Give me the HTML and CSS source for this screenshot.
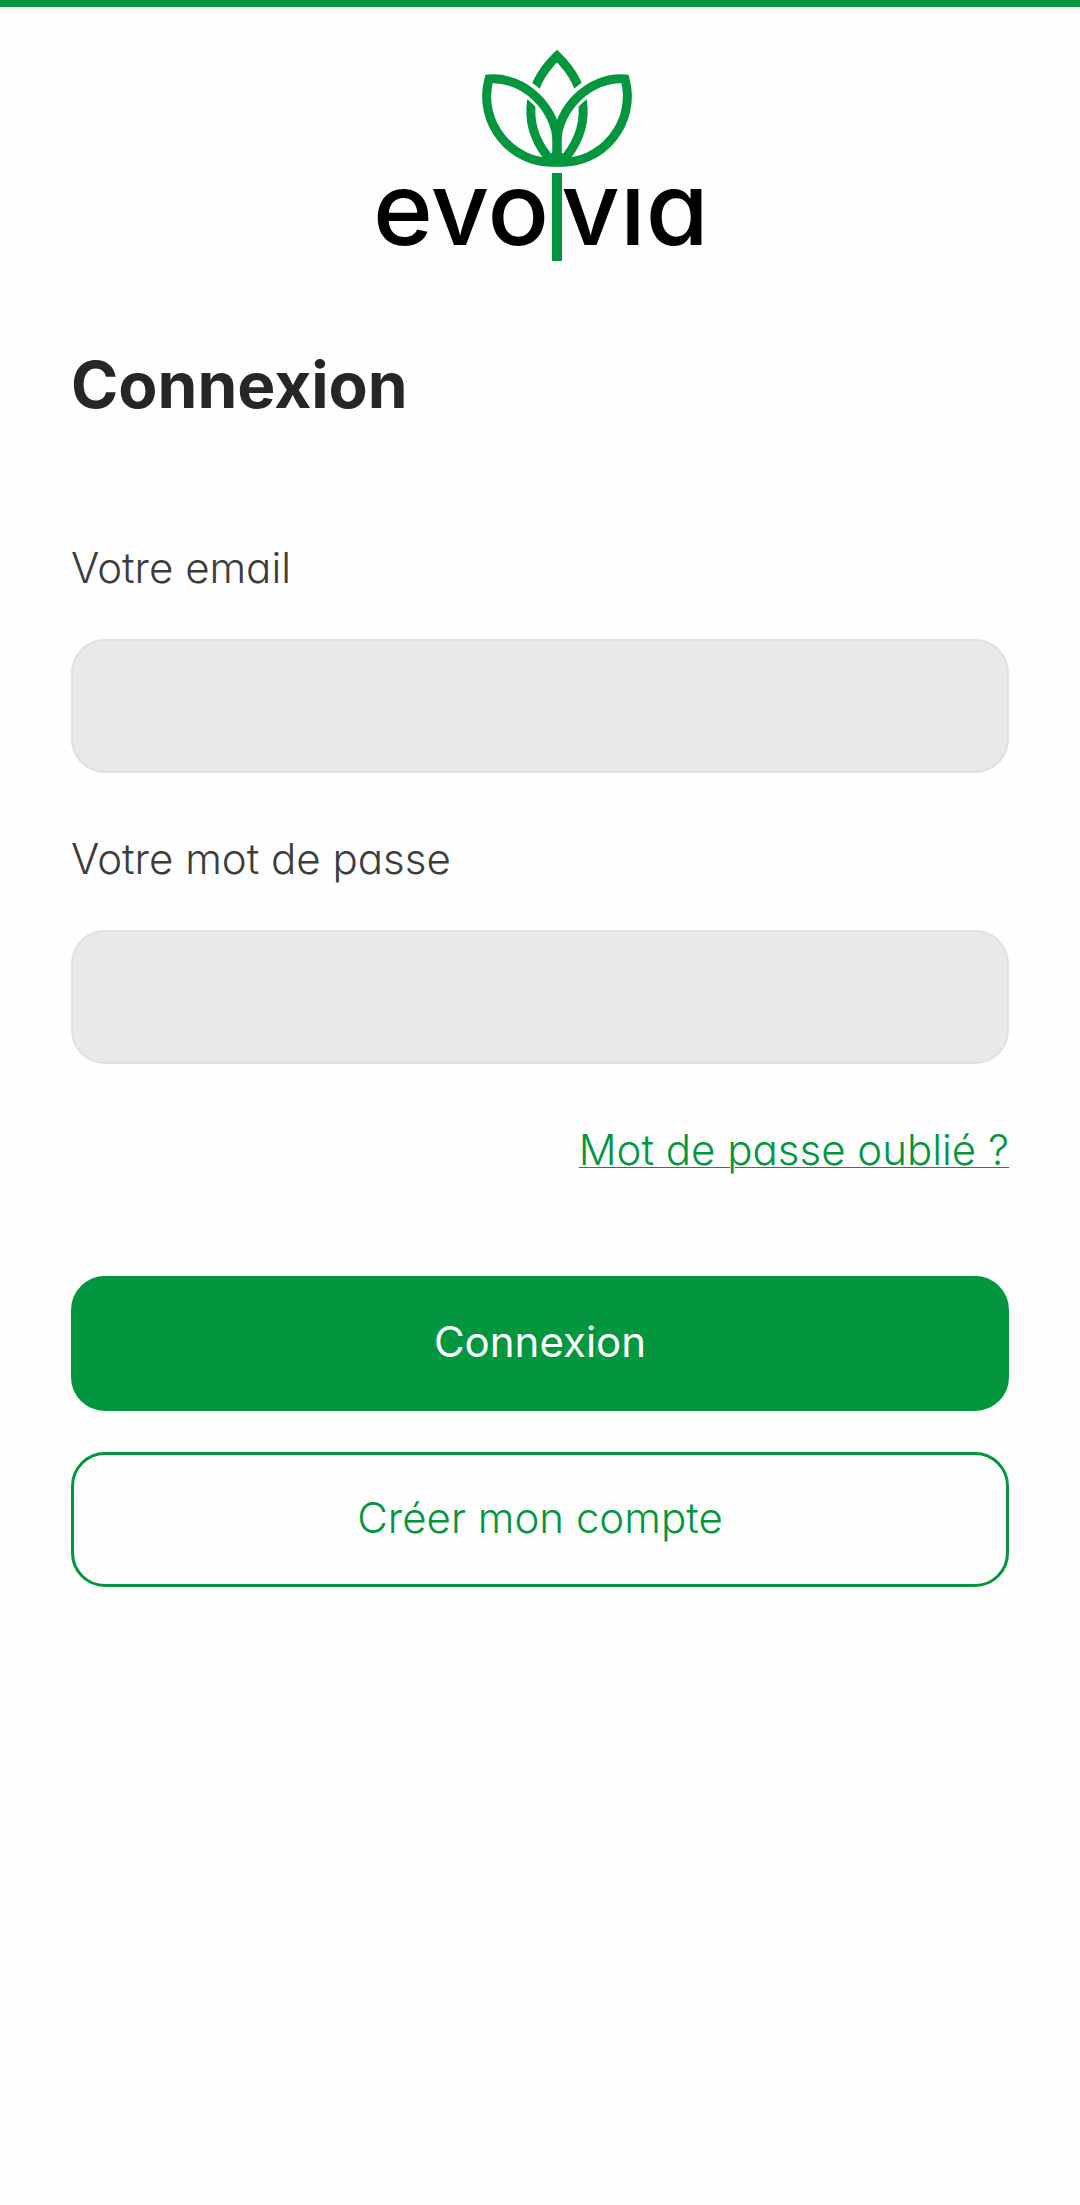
FILE: index.html
```
<!DOCTYPE html>
<html lang="fr">
<head>
    <meta charset="utf-8">
    <meta name="viewport" content="width=device-width, initial-scale=1">
    <title>Connexion</title>
    <link rel="stylesheet" href="styles.css">
</head>
<body>
    <header class="header">
        <svg class="logo" width="330" height="228" viewBox="-25 0 330 228" role="img" aria-label="evolvia">
            <!-- flower: centre petal, gap, side petals -->
            <path class="petal" d="M152 114C122 80 124 40 157 8C190 40 192 80 162 114"/>
            <path class="petal-gap" d="M100 31C128 34 157 61 157 92C157 61 186 34 214 31"/>
            <path class="petal" d="M89 31C124 28 157 61 157 94V114C112 118 77 74 89 31Z"/>
            <path class="petal" d="M225 31C190 28 157 61 157 94V114C202 118 237 74 225 31Z"/>
            <path class="logo-stem" d="M144 111L157 101L170 111V118H144Z"/>
            <rect class="logo-stem" x="152" y="125" width="10" height="88"/>
            <text class="logo-text" x="61" y="197" text-anchor="middle">evo</text>
            <text class="logo-text" x="235" y="197" text-anchor="middle">vıa</text>
        </svg>
    </header>

    <main class="content">
        <h1 class="title">Connexion</h1>

        <form class="login-form">
            <label class="label" for="email">Votre email</label>
            <input class="input" type="email" id="email" name="email">

            <label class="label" for="password">Votre mot de passe</label>
            <input class="input" type="password" id="password" name="password">

            <a class="forgot" href="#">Mot de passe oublié ?</a>

            <button class="btn btn-primary" type="submit">Connexion</button>
            <button class="btn btn-outline" type="button">Créer mon compte</button>
        </form>
    </main>
</body>
</html>
```
FILE: styles.css
```
* {
    box-sizing: border-box;
}

body {
    margin: 0;
    background: #fefefe;
    color: #3c3c3c;
    font-family: Inter, "Noto Sans", sans-serif;
    font-size: 42px;
    font-weight: 300;
    line-height: 60px;
    /* single-storey a */
    font-feature-settings: "cv11";
}

.header {
    display: flex;
    justify-content: center;
    padding-top: 41px;
    border-top: 7px solid #02963f;
}

.logo {
    display: block;
    overflow: visible;
}

.petal {
    fill: none;
    stroke: #02963f;
    stroke-width: 9;
}

.petal-gap {
    fill: none;
    stroke: #fefefe;
    stroke-width: 16;
}

.logo-stem {
    fill: #02963f;
}

.logo-text {
    fill: #000;
    font-size: 102px;
    font-weight: 500;
}

.content {
    padding: 64px 71px;
}

.title {
    margin: 0 0 108px;
    color: #262626;
    font-size: 64px;
    font-weight: 700;
    line-height: 90px;
}

.login-form {
    display: flex;
    flex-direction: column;
}

.label {
    margin-bottom: 41px;
}

.input {
    width: 100%;
    height: 134px;
    margin-bottom: 56px;
    padding: 0 36px;
    border: 2px solid #e0e0e0;
    border-radius: 34px;
    background: #e9e9e9;
    color: inherit;
    font: inherit;
}

.forgot {
    align-self: flex-end;
    margin-bottom: 96px;
    color: #02963f;
    text-decoration-thickness: 1px;
    text-underline-offset: 2px;
}

.btn {
    height: 135px;
    margin-bottom: 41px;
    padding: 0 36px 4px;
    border: 3px solid #02963f;
    border-radius: 34px;
    font: inherit;
    font-feature-settings: inherit;
}

.btn-primary {
    background: #02963f;
    color: #fff;
    font-weight: 400;
}

.btn-outline {
    background: none;
    color: #02963f;
}
```
